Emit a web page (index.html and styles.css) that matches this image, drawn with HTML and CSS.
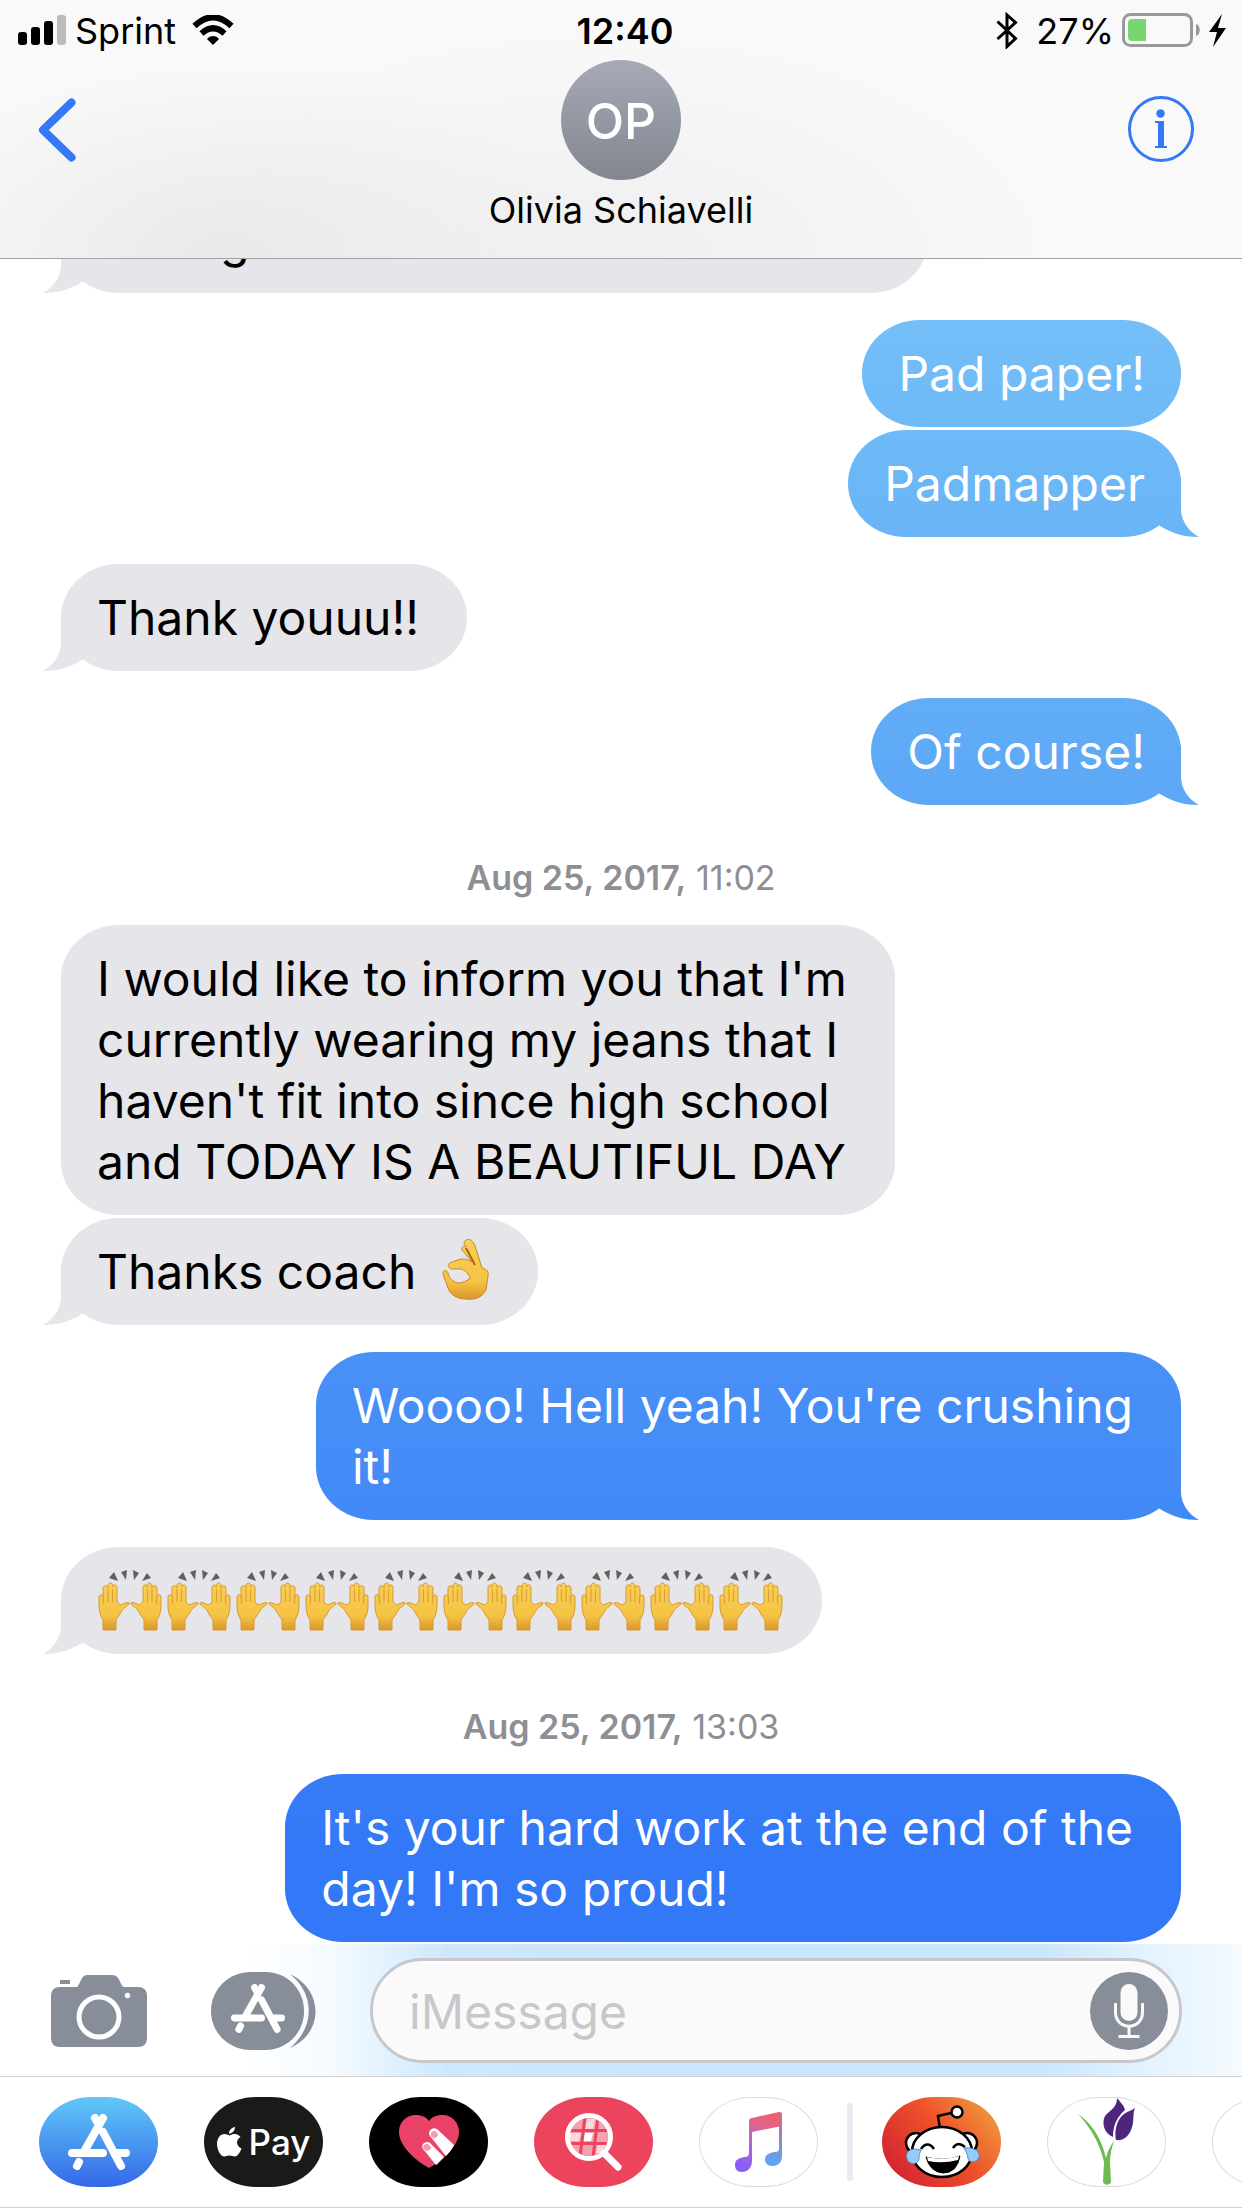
FILE: index.html
```html
<!DOCTYPE html>
<html lang="en">
<head>
<meta charset="utf-8">
<meta name="viewport" content="width=device-width, initial-scale=1">
<title>Messages</title>
<link rel="stylesheet" href="styles.css">
</head>
<body>
<svg class="defs" aria-hidden="true">
  <defs>
    <linearGradient id="skin" x1="0" y1="0" x2="0" y2="1"><stop offset="0" stop-color="#f9cf55"/><stop offset=".7" stop-color="#f5c344"/><stop offset="1" stop-color="#d9982c"/></linearGradient>
    <linearGradient id="note" x1=".7" y1="0" x2=".3" y2="1"><stop offset="0" stop-color="#f0606c"/><stop offset=".25" stop-color="#e0658c"/><stop offset=".6" stop-color="#a468d8"/><stop offset="1" stop-color="#8a5cf8"/></linearGradient>
    <linearGradient id="note2" x1="0" y1="0" x2="0" y2="1"><stop offset="0" stop-color="#d86880"/><stop offset=".5" stop-color="#8a8cc8"/><stop offset="1" stop-color="#5aa6fa"/></linearGradient>
    <g id="half-hand">
      <path d="M4 60V50C1 45 0 41 0 35V27c0-3 4-3 4 0V18c0-3 5-3 5 0V16c0-4 5-4 5 0v1c0-3 4-3 4 1v14c3 3 4 3 6 2 4-2 7-2 6 0-3 3-6 4-8 8-2 5-5 6-5 9v9z" fill="url(#skin)" stroke="#d79a30" stroke-width="1"/>
      <path d="M4.500 26v8M9 19v13M13.500 19v13" stroke="#dda034" stroke-width="1.200" fill="none"/>
    </g>
    <symbol id="hands" viewBox="0 0 69 64">
      <use href="#half-hand" x="2"/>
      <use href="#half-hand" transform="matrix(-1 0 0 1 64 0)"/>
      <path d="M12 8l5-6 4 9zM24 2l6-2-1 10zM36 0l6 3-5 7zM45 11l5-8 4 5z" fill="#606060"/>
    </symbol>
    <symbol id="store" viewBox="0 0 62 56">
      <g stroke="currentColor" stroke-width="8" stroke-linecap="round" fill="none">
        <path d="M27 4L31 11M35 4L17 36M35 18L53 52M4 39H35M49 39H58M11 48L9 52"/>
      </g>
    </symbol>
  </defs>
</svg>

<header class="top">
  <div class="status">
    <div class="status-left">
      <svg width="48" height="30" viewBox="0 0 48 30" aria-hidden="true"><rect y="17" width="9" height="13" rx="3"/><rect x="13" y="12" width="9" height="18" rx="3"/><rect x="26" y="6" width="9" height="24" rx="3"/><rect x="39" width="9" height="30" rx="3" fill="#bbb"/></svg>
      <span class="carrier">Sprint</span>
      <svg width="42" height="30" viewBox="0 0 42 30" aria-hidden="true"><path d="M21 30l-6-6c3-4 9-4 12 0z"/><path d="M9.500 18.500Q21 8 32.500 18.500M2.500 11Q21-6.500 39.500 11" fill="none" stroke="#000" stroke-width="6"/></svg>
    </div>
    <time class="clock">12:40</time>
    <div class="status-right">
      <svg width="22" height="37" viewBox="0 0 22 37" aria-hidden="true"><path d="M1.500 9.500L19.500 26.500 11 34.500V3l8.500 7.500L1.500 27" fill="none" stroke="#000" stroke-width="3"/></svg>
      <span class="percent">27%</span>
      <svg width="106" height="36" viewBox="0 0 106 36" aria-hidden="true"><rect x="1.500" y="2.500" width="68" height="31" rx="7" fill="none" stroke="#999" stroke-width="3"/><path d="M74 12c5 1 5 11 0 12z" fill="#999"/><path d="M10 7h14v22H10a4 4 0 0 1-4-4V11a4 4 0 0 1 4-4z" fill="#78d672"/><path d="M100 2L87 20h8l-4 15 13-19h-8z"/></svg>
    </div>
  </div>
  <nav class="nav">
    <button class="back" type="button" aria-label="Back"><svg width="38" height="64" viewBox="0 0 38 64"><path d="M33.500 4.500L5 32l28.500 27.500" fill="none" stroke="currentColor" stroke-width="8" stroke-linecap="round" stroke-linejoin="round"/></svg></button>
    <div class="contact">
      <span class="avatar" aria-hidden="true">OP</span>
      <h1 class="name">Olivia Schiavelli</h1>
    </div>
    <button class="info" type="button" aria-label="Details"><svg width="66" height="66" viewBox="0 0 66 66"><circle cx="33" cy="33" r="31.500" fill="none" stroke="currentColor" stroke-width="3"/><circle cx="32.500" cy="17.500" r="4.200" fill="currentColor"/><path d="M27 25h9v25h3v2H27v-2h3V27h-3z" fill="currentColor"/></svg></button>
  </nav>
</header>

<main class="thread">
  <p class="bubble them tail earlier">g</p>
  <p class="bubble me turn">Pad paper!</p>
  <p class="bubble me tail">Padmapper</p>
  <p class="bubble them tail turn">Thank youuu!!</p>
  <p class="bubble me tail turn">Of course!</p>
  <p class="stamp"><b>Aug 25, 2017,</b> 11:02</p>
  <p class="bubble them">I would like to inform you that I'm<br>currently wearing my jeans that I<br>haven't fit into since high school<br>and TODAY IS A BEAUTIFUL DAY</p>
  <p class="bubble them tail">Thanks coach <svg class="emoji-ok" role="img" aria-label="OK hand" width="48" height="62" viewBox="0 0 48 62"><path d="M24 1c4-2 7 1 9 6l7 22c5 1 7 4 6 8l-2 14c-4 8-12 10-20 9C14 60 8 55 6 49L1 35c-1-4 4-5 5-1 1 5 5 9 10 10 5 0 9-2 12-5-1-4-5-8-9-9H10c-5-1-5-6 0-7l9-3c5 0 8 1 11 3L20 11c-1-3 2-5 4-3l-2-4q0-2 2-3z" fill="url(#skin)" stroke="#c98928"/><path d="M24 9l9 17" stroke="#a9661c" stroke-width="2" fill="none"/></svg></p>
  <p class="bubble me tail turn wrapped">Woooo! Hell yeah! You're crushing<br>it!</p>
  <p class="bubble them tail turn emoji-only"><svg class="emoji-row" role="img" aria-label="Ten raised hands" width="690" height="64" viewBox="0 0 690 64"><use href="#hands" width="69" height="64"/><use href="#hands" x="69" width="69" height="64"/><use href="#hands" x="138" width="69" height="64"/><use href="#hands" x="207" width="69" height="64"/><use href="#hands" x="276" width="69" height="64"/><use href="#hands" x="345" width="69" height="64"/><use href="#hands" x="414" width="69" height="64"/><use href="#hands" x="483" width="69" height="64"/><use href="#hands" x="552" width="69" height="64"/><use href="#hands" x="621" width="69" height="64"/></svg></p>
  <p class="stamp"><b>Aug 25, 2017,</b> 13:03</p>
  <p class="bubble me wrapped">It's your hard work at the end of the<br>day! I'm so proud!</p>
</main>

<form class="composer">
  <button class="tool" type="button" aria-label="Camera"><svg width="96" height="72" viewBox="0 0 96 72"><path d="M9 12h17c2-1 4-9 7-11q1-1 4-1h24q4 0 6 3c3 4 3 8 6 9h14q9 0 9 9v42q0 9-9 9H9q-9 0-9-9V21q0-9 9-9z"/><path d="M9 9V6q0-1 1-1h8q1 0 1 1v3z"/><circle cx="48" cy="42" r="20" fill="none" stroke="#fff" stroke-width="5"/><circle cx="76.500" cy="20.500" r="2.700" fill="#fff"/></svg></button>
  <button class="tool apps-toggle" type="button" aria-label="Apps"><svg width="106" height="78" viewBox="0 0 106 78"><path d="M79 2C113 18 113 61 79 76 104 55 104 22 79 2z"/><path d="M40 0h14c22 0 39 17 39 39S76 78 54 78H40C18 78 0 61 0 39S18 0 40 0z"/><use href="#store" x="20" y="12" width="54" height="49" color="#fff"/></svg></button>
  <div class="field">
    <input class="text" type="text" placeholder="iMessage" aria-label="iMessage">
    <button class="tool" type="button" aria-label="Record audio"><svg width="78" height="78" viewBox="0 0 78 78"><circle cx="39" cy="39" r="39"/><rect x="30.500" y="12" width="17" height="37" rx="8.500" fill="#fafafa"/><path d="M25.500 31v9c0 19 27 19 27 0v-9M39 54v11M28.500 64.500h21" fill="none" stroke="#fafafa" stroke-width="3"/></svg></button>
  </div>
</form>

<nav class="strip" aria-label="iMessage apps">
  <button class="app app-store" type="button" aria-label="App Store"><svg width="62" height="56"><use href="#store"/></svg></button>
  <button class="app app-pay" type="button" aria-label="Apple Pay"><svg width="25" height="30" viewBox="0 0 25 30"><path d="M18 0c0 4-3 6.500-6 6.500C12 3 15 .5 18 0zM12.500 8.500c2-1 3-1.500 5-1.500 2.500 0 4.500 1 6 3-5 3-4.500 9 1 11.500-1.500 4-4 8-6.500 8-2 0-3-1-5.500-1s-3.500 1-5 1C3 29.500 0 22 0 17 0 11 3.500 7 7.500 7c2 0 3.500 1 5 1.500z" fill="#fff"/></svg><span>Pay</span></button>
  <button class="app app-touch" type="button" aria-label="Digital Touch"><svg width="60" height="54" viewBox="0 0 60 54"><path d="M30 53C17 46 0 31 0 17 0-1 22-5 30 6 38-5 60-1 60 17c0 14-17 29-30 36z" fill="#eb4268"/><path d="M27 27L45 43 38 50 26 37z" fill="#b82a50"/><path d="M31 21c-3-4 2-10 7-7l17 16c-2 4-5 8-8 11zM24 34c-3-4 3-9 7-6l14 14-8 8z" fill="#fff"/><path d="M32 21c-1-3 1-5 4-5l3 3c0 3-3 5-5 4zM24 33c0-3 3-5 5-4l3 3c0 3-3 4-5 4z" fill="#f29bb4"/></svg></button>
  <button class="app app-images" type="button" aria-label="#images"><svg width="58" height="58" viewBox="0 0 58 58"><circle cx="24" cy="24" r="19" fill="#f4a2af"/><path d="M20 20h8l-2 8h-8z" fill="#fff"/><path d="M5 20h11l-2 8H5zM33 32h8l-6 8h-4zM22 6h8l-2 10h-8z" fill="#fff" opacity=".6"/><path d="M4 17.500h40M4 30.500h40M20 4L15 44M33 4L28 44" stroke="#ec445c" stroke-width="3"/><circle cx="24" cy="24" r="21.500" fill="none" stroke="#fff" stroke-width="5"/><path d="M39 40l14 14" stroke="#fff" stroke-width="7" stroke-linecap="round"/></svg></button>
  <button class="app app-music" type="button" aria-label="Music"><svg width="48" height="60" viewBox="0 0 48 60"><path d="M14 9q0-3 3-3L44 0q3 0 3 3v11l-30 6v29C17 57 11 60 7 60c-5 0-7-3-7-7 0-6 5-7 9-8 4 0 5-1 5-5z" fill="url(#note)"/><path d="M44 0q3 0 3 3v41c0 8-6 10-10 10s-7-3-7-6c0-6 5-7 9-8 4 0 5-1 5-4z" fill="url(#note2)"/></svg></button>
  <span class="divider"></span>
  <button class="app app-reddit" type="button" aria-label="Reddit"><svg width="76" height="74" viewBox="0 0 76 74"><g stroke="#000" stroke-width="2.500"><circle cx="12" cy="38" r="10" fill="#fff"/><circle cx="63" cy="38" r="10" fill="#fff"/><path d="M36 24l-2-13 13-3" fill="none"/><circle cx="53" cy="7" r="5.500" fill="#fff"/><ellipse cx="38" cy="47" rx="30" ry="25" fill="#fff"/></g><path d="M17 44c4-6 9-6 13 0M49 43c3-5 7-5 12-1" fill="none" stroke="#000" stroke-width="2.500"/><path d="M22 52q17 5 34-1-3 17-17 17-13-1-17-16z" stroke="#000" fill="#000"/><path d="M23 52q16 4 32-1l-1 4q-15 4-30 1z" fill="#fff"/><path d="M17 45C6 42 1 47 3 54c2 6 11 6 12 0 0-5 1-6 2-9zM60 43c10-1 16 3 15 9-2 6-11 6-11 1-1-5-2-7-4-10z" fill="#98ccf6" stroke="#4696dc"/></svg></button>
  <button class="app app-tulip" type="button" aria-label="Tulip"><svg width="60" height="88" viewBox="0 0 60 88"><path d="M1 16C13 24 24 38 29 60q2-9 8-17-4 11-4 22l1 18c0 5-8 5-8 0l1-19C23 46 14 30 1 16z" fill="#6ebb56"/><path d="M40 0c3 4 7 7 8 12-7 6-12 14-12 27-8-3-12-13-8-21C33 12 40 10 40 0z" fill="#4e257c"/><path d="M58 10c-3 7 0 13-4 22-3 7-8 11-15 10-2-9 1-21 8-26 4-3 7-3 11-6z" fill="#4e257c"/></svg></button>
  <button class="app" type="button" aria-label="More"></button>
</nav>
</body>
</html>
```
FILE: styles.css
```css
* { box-sizing: border-box; }

body {
  margin: 0;
  height: 100vh;
  display: flex;
  flex-direction: column;
  overflow: hidden;
  background: #fff;
  color: #000;
  font-family: Inter, "Liberation Sans", sans-serif;
}

h1, p { margin: 0; font-weight: 400; }
svg { display: block; flex: none; }

button {
  display: flex;
  align-items: center;
  justify-content: center;
  margin: 0;
  padding: 0;
  border: 0;
  background: none;
  color: inherit;
  font: inherit;
}

.defs { position: absolute; width: 0; height: 0; }

/* Status bar and conversation header */
.top {
  flex: none;
  border-bottom: 1px solid #a2a2a2;
  background:
    radial-gradient(360px 200px at 18% 100%, #e9e9e9, transparent),
    radial-gradient(480px 240px at 48% 100%, #efeff1, transparent),
    #f9f9f9;
}

.status {
  display: grid;
  grid-template-columns: 1fr auto 1fr;
  align-items: center;
  height: 60px;
  padding: 0 14px 0 18px;
  font-size: 36px;
}

.status-left, .status-right { display: flex; align-items: center; }
.status-right { justify-content: flex-end; }
.carrier { margin: 2px 16px 0 9px; }
.percent { margin: 2px 8px 0 18px; }
.clock { margin: 2px 0 0 4px; font-weight: 600; }

.nav {
  display: grid;
  grid-template-columns: 1fr auto 1fr;
  align-items: start;
  height: 198px;
  padding: 0 48px 0 38px;
}

.back, .info { width: 66px; margin-top: 36px; color: #3478f6; }
.back { justify-content: flex-start; padding-top: 2px; }
.info { justify-self: end; }
.contact { display: flex; flex-direction: column; align-items: center; padding-left: 10px; }

.avatar {
  width: 120px;
  height: 120px;
  border-radius: 50%;
  background: linear-gradient(#a6aab7, #82868f);
  color: #fff;
  font-size: 50px;
  font-weight: 500;
  line-height: 122px;
  text-align: center;
}

.name { margin-top: 8px; font-size: 36px; line-height: 44px; }

/* Messages */
.thread {
  flex: 1;
  min-height: 0;
  display: flex;
  flex-direction: column;
  justify-content: flex-end;
  align-items: flex-start;
  gap: 3px;
  padding: 0 61px 2px;
  overflow: hidden;
}

.bubble {
  position: relative;
  flex: none;
  padding: 23px 36px;
  border-radius: 58px / 53px;
  font-size: 48px;
  line-height: 61px;
  white-space: nowrap;
}

.turn { margin-top: 24px; }
.them { padding-right: 48px; background: #e5e5ea; }

.me {
  align-self: flex-end;
  background: linear-gradient(#7fcbf8 0, #74bff8 320px, #68b4f6 537px, #5da8f6 805px, #478ff7 1400px, #3378f6 1850px) fixed;
  color: #fff;
}

.wrapped { padding-right: 48px; }

.tail::before {
  content: "";
  position: absolute;
  bottom: 0;
  left: -18px;
  width: 60px;
  height: 60px;
  background: inherit;
  clip-path: path("M18 0V32C18 43 11 54 0 60C14 60 26 57 39 49L50 40V0Z");
}

.me.tail::before {
  left: auto;
  right: -18px;
  clip-path: path("M42 0V32C42 43 49 54 60 60C46 60 34 57 21 49L10 40V0Z");
}

.earlier { width: 867px; padding-left: 159px; }
.emoji-ok { display: inline-block; margin: -12px 0 0 12px; vertical-align: -12px; }
.emoji-only { padding-right: 35px; }
.emoji-row { margin-bottom: -3px; }

.stamp {
  flex: none;
  align-self: center;
  height: 114px;
  padding-top: 50px;
  color: #8e8e93;
  font-size: 34px;
  line-height: 40px;
}

.stamp b { font-weight: 600; }

/* Composer */
.composer {
  flex: none;
  display: flex;
  align-items: center;
  height: 133px;
  padding: 1px 60px 0 51px;
  border-bottom: 1px solid #d0d0d3;
  background: linear-gradient(90deg, #fff 20%, #f4faff 27%, #cde8fe 36%, #c8e6ff 55%, #cae7ff 84%, #e2f2ff 92%, #f5fafe);
}

.tool { flex: none; fill: #878e99; }
.apps-toggle { margin: 0 53px 0 64px; }

.field {
  flex: 1;
  min-width: 0;
  display: flex;
  align-items: center;
  height: 105px;
  padding: 0 11px 0 36px;
  border: 3px solid #c7c7cc;
  border-radius: 53px;
  background: #fafafa;
}

.text {
  flex: 1;
  min-width: 0;
  padding: 2px 0 0;
  border: 0;
  outline: 0;
  background: none;
  font: inherit;
  font-size: 48px;
}

.text::placeholder { color: #c7c7cc; opacity: 1; }

/* App strip */
.strip {
  flex: none;
  display: flex;
  align-items: center;
  height: 131px;
  padding-left: 39px;
  border-bottom: 1px solid #d0d0d3;
  overflow: hidden;
}

.app {
  flex: none;
  width: 119px;
  height: 90px;
  margin-right: 46px;
  border: 1px solid #dcdcde;
  border-radius: 52px / 45px;
}

.app-store { border: 0; background: linear-gradient(#60c8f8, #3468e8); color: #fff; }
.app-pay { gap: 7px; border: 0; background: #1a1a18; color: #fff; font-size: 35px; font-weight: 500; }
.app-touch { border: 0; background: #000; }
.app-images { border: 0; background: #ec445c; }
.app-music { margin-right: 29px; }
.divider { flex: none; width: 6px; height: 78px; margin-right: 29px; border-radius: 3px; background: #eaeaf0; }
.app-reddit { border: 0; background: linear-gradient(50deg, #d62832 15%, #ee5228 55%, #ef963e 90%); }
```
